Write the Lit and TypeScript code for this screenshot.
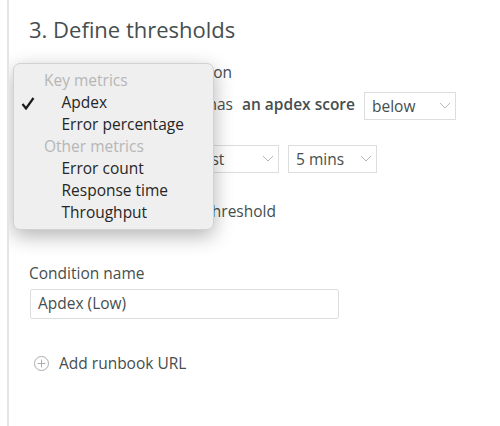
import { html, css, LitElement } from "lit";
import { customElement } from "lit/decorators.js";

const chevron = html`<svg width="12" height="7" viewBox="0 0 12 7"><path d="M1 1l5 5 5-5" fill="none" stroke="#b4b8b8" stroke-width="1"/></svg>`;

@customElement("app-root")
export class AppRoot extends LitElement {
	static styles = css`
		:host {
			display: block;
			font-family: "Open Sans", sans-serif;
			color: #464e4e;
			font-size: 15.5px;
		}
		.page {
			position: relative;
			height: 426px;
			box-sizing: border-box;
			margin-left: 7px;
			border-left: 2px solid #e3e4e4;
			padding: 15px 0 0 20px;
			overflow: hidden;
		}
		h2 {
			margin: 0;
			font-size: 22px;
			line-height: 28px;
			font-weight: 400;
		}
		.line {
			display: flex;
			align-items: center;
			height: 28px;
			white-space: pre;
		}
		/* lead-in text runs under the open menu, only its tail shows */
		.lead {
			text-align: right;
		}
		.l1 {
			margin-top: 15px;
		}
		.l1 .lead {
			width: 203px;
		}
		.l2 {
			margin-top: 6px;
			gap: 9px;
		}
		.l2 .lead {
			width: 204px;
			padding-bottom: 5px;
		}
		.l2 b {
			padding-bottom: 5px;
		}
		.l3 {
			margin-top: 25px;
			gap: 9px;
		}
		.l3 .lead {
			width: 122px;
		}
		.l4 {
			margin-top: 24px;
		}
		.l4 .lead {
			width: 247px;
		}
		b {
			font-weight: 600;
		}
		.select {
			box-sizing: border-box;
			height: 28px;
			border: 1px solid #dcdede;
			background: #fff;
			display: flex;
			align-items: center;
			justify-content: space-between;
			padding: 0 4px 1px 7px;
		}
		.below {
			width: 92px;
		}
		.least {
			width: 119px;
			padding-left: 11px;
		}
		.mins {
			width: 89px;
		}
		label {
			display: block;
			margin-top: 38px;
			line-height: 20px;
		}
		.input {
			box-sizing: border-box;
			width: 309px;
			height: 30px;
			margin: 6px 0 0 1px;
			padding: 0 7px 2px;
			display: flex;
			align-items: center;
			background: #fff;
			border: 1px solid #dcdede;
			border-radius: 2px;
		}
		.runbook {
			display: flex;
			align-items: center;
			gap: 10px;
			margin: 34px 0 0 5px;
			line-height: 20px;
		}
		.menu {
			position: absolute;
			left: 4px;
			top: 63px;
			width: 201px;
			height: 167px;
			box-sizing: border-box;
			padding: 5px 0;
			background: #efefef;
			border: 1px solid #d2d2d2;
			border-radius: 7px;
			box-shadow: 0 6px 20px rgba(0, 0, 0, 0.3);
			color: #262626;
		}
		.item,
		.group {
			position: relative;
			height: 22px;
			line-height: 22px;
		}
		.item {
			padding-left: 47.5px;
		}
		.group {
			padding-left: 30px;
			color: #b6b6b6;
		}
		.check {
			position: absolute;
			left: 7px;
			top: 6px;
		}
	`;

	render() {
		return html`
			<div class="page">
				<h2>3. Define thresholds</h2>
				<div class="line l1"><span class="lead">Alert on a condition</span></div>
				<div class="line l2">
					<span class="lead">When target has</span><b>an apdex score</b>
					<div class="select below">below ${chevron}</div>
				</div>
				<div class="line l3">
					<span class="lead">for</span>
					<div class="select least">at least ${chevron}</div>
					<div class="select mins">5 mins ${chevron}</div>
				</div>
				<div class="line l4"><span class="lead">Add a warning threshold</span></div>
				<label>Condition name</label>
				<div class="input">Apdex (Low)</div>
				<div class="runbook">
					<svg width="15" height="15" viewBox="0 0 15 15">
						<circle cx="7.5" cy="7.5" r="7" fill="none" stroke="#a9adad" />
						<path d="M7.5 3.5v8M3.5 7.5h8" stroke="#a9adad" />
					</svg>
					<span>Add runbook URL</span>
				</div>
				<div class="menu">
					<div class="group">Key metrics</div>
					<div class="item">
						<svg class="check" width="14" height="13" viewBox="0 0 14 13">
							<path d="M1.5 7L5 11.5L12.5 1" fill="none" stroke="#1c1c1c" stroke-width="2.2" />
						</svg>
						Apdex
					</div>
					<div class="item">Error percentage</div>
					<div class="group">Other metrics</div>
					<div class="item">Error count</div>
					<div class="item">Response time</div>
					<div class="item">Throughput</div>
				</div>
			</div>
		`;
	}
}
